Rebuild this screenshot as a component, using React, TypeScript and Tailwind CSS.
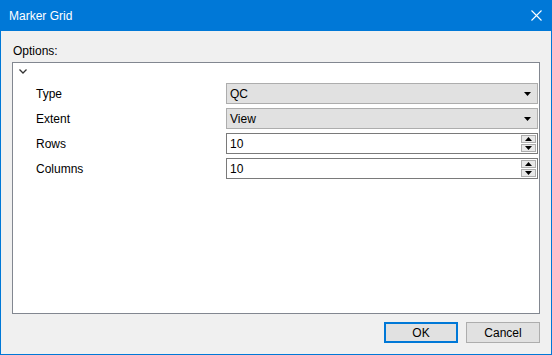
import React from 'react';

const font = { fontFamily: '"Segoe UI", "Liberation Sans", Arial, sans-serif' };

const ComboArrow = () => (
    <svg width="7" height="4" viewBox="0 0 7 4" className="mr-[6px]">
        <path d="M0 0 H7 L3.5 4 Z" fill="#000" />
    </svg>
);

const Combo = ({ value }: { value: string }) => (
    <div className="flex h-[21px] items-center justify-between border border-[#adadad] bg-[#e1e1e1]">
        <span className="pl-[3px] text-[12px] leading-none text-black">{value}</span>
        <ComboArrow />
    </div>
);

const Spinner = ({ value }: { value: string }) => (
    <div className="flex h-[21px] items-center justify-between border border-[#7a7a7a] bg-white">
        <span className="pl-[3px] text-[12px] leading-none text-black">{value}</span>
        <div className="mr-[1px] flex h-[17px] w-[15px] flex-col gap-[1px]">
            <div className="flex flex-1 items-center justify-center border border-[#adadad] bg-[#e8e8e8]">
                <svg width="7" height="4" viewBox="0 0 7 4">
                    <path d="M0 4 H7 L3.5 0 Z" fill="#000" />
                </svg>
            </div>
            <div className="flex flex-1 items-center justify-center border border-[#adadad] bg-[#e8e8e8]">
                <svg width="7" height="4" viewBox="0 0 7 4">
                    <path d="M0 0 H7 L3.5 4 Z" fill="#000" />
                </svg>
            </div>
        </div>
    </div>
);

const Row = ({ label, children }: { label: string; children: React.ReactNode }) => (
    <div className="flex items-center">
        <div className="w-[213px] pl-[23px] text-[12px] text-black">{label}</div>
        <div className="flex-1 pr-[1px]">{children}</div>
    </div>
);

export default function App() {
    return (
        <div style={font} className="flex h-[355px] w-[552px] flex-col border-x border-b border-[#0078d7] bg-[#f0f0f0]">
            {/* title bar */}
            <div className="-mx-[1px] flex h-[31px] shrink-0 items-center justify-between bg-[#0078d7] pl-[9px] pr-[10px]">
                <span className="text-[12px] text-white">Marker Grid</span>
                <svg width="11" height="11" viewBox="0 0 11 11">
                    <path d="M0.5 0.5 L10.5 10.5 M10.5 0.5 L0.5 10.5" stroke="#fff" strokeWidth="1.1" />
                </svg>
            </div>

            <div className="flex flex-1 flex-col px-[11px]">
                <div className="mb-[3px] mt-[12px] h-[16px] pl-[1px] text-[12px] leading-[16px] text-black">Options:</div>

                {/* property panel */}
                <div className="flex h-[252px] flex-col border border-[#828790] bg-white">
                    <div className="h-[20px] pl-[6px] pt-[6px]">
                        <svg width="8" height="5" viewBox="0 0 8 5">
                            <path d="M0.5 0.5 L4 4 L7.5 0.5" stroke="#333" strokeWidth="1.3" fill="none" />
                        </svg>
                    </div>
                    <div className="flex flex-col gap-[4px]">
                        <Row label="Type">
                            <Combo value="QC" />
                        </Row>
                        <Row label="Extent">
                            <Combo value="View" />
                        </Row>
                        <Row label="Rows">
                            <Spinner value="10" />
                        </Row>
                        <Row label="Columns">
                            <Spinner value="10" />
                        </Row>
                    </div>
                </div>

                {/* buttons */}
                <div className="mt-[8px] flex justify-end gap-[8px]">
                    <button className="h-[21px] w-[74px] border-2 border-[#0078d7] bg-[#e1e1e1] text-[12px] text-black">OK</button>
                    <button className="h-[21px] w-[74px] border border-[#adadad] bg-[#e1e1e1] text-[12px] text-black">Cancel</button>
                </div>
            </div>
        </div>
    );
}
